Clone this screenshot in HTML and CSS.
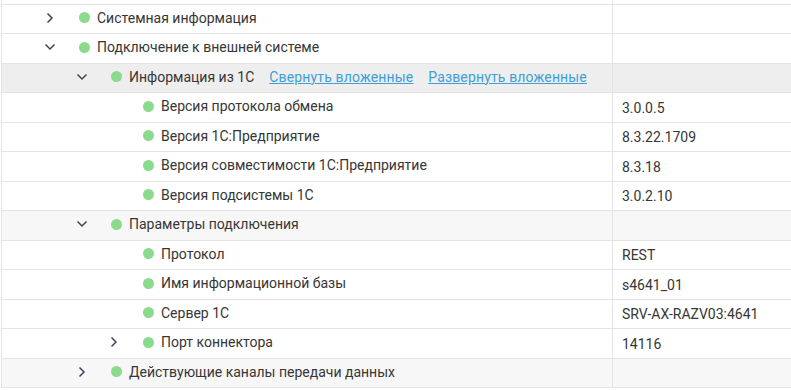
FILE: index.html
```html
<!DOCTYPE html>
<html>
<head>
    <title>Параметры подключения</title>
    <link rel="stylesheet" href="styles.css">
</head>
<body>
    <div class="tree">
        <div class="row spacer">
            <div class="name"></div>
            <div class="value"></div>
        </div>

        <div class="row">
            <div class="name lvl-0">
                <span class="toggle"><svg width="8" height="12" viewBox="0 0 8 12"><path d="M1.5 1.5 L6 6 L1.5 10.5" /></svg></span>
                <span class="dot"></span>
                <span class="title">Системная информация</span>
            </div>
            <div class="value"></div>
        </div>

        <div class="row">
            <div class="name lvl-0">
                <span class="toggle"><svg width="12" height="8" viewBox="0 0 12 8"><path d="M1.5 1.5 L6 6 L10.5 1.5" /></svg></span>
                <span class="dot"></span>
                <span class="title">Подключение к внешней системе</span>
            </div>
            <div class="value"></div>
        </div>

        <div class="row group active">
            <div class="name lvl-1">
                <span class="toggle"><svg width="12" height="8" viewBox="0 0 12 8"><path d="M1.5 1.5 L6 6 L10.5 1.5" /></svg></span>
                <span class="dot"></span>
                <span class="title">Информация из 1С</span>
                <a class="link" href="#">Свернуть вложенные</a>
                <a class="link" href="#">Развернуть вложенные</a>
            </div>
            <div class="value"></div>
        </div>

        <div class="row">
            <div class="name lvl-2">
                <span class="toggle"></span>
                <span class="dot"></span>
                <span class="title">Версия протокола обмена</span>
            </div>
            <div class="value">3.0.0.5</div>
        </div>

        <div class="row">
            <div class="name lvl-2">
                <span class="toggle"></span>
                <span class="dot"></span>
                <span class="title">Версия 1С:Предприятие</span>
            </div>
            <div class="value">8.3.22.1709</div>
        </div>

        <div class="row">
            <div class="name lvl-2">
                <span class="toggle"></span>
                <span class="dot"></span>
                <span class="title">Версия совместимости 1С:Предприятие</span>
            </div>
            <div class="value">8.3.18</div>
        </div>

        <div class="row">
            <div class="name lvl-2">
                <span class="toggle"></span>
                <span class="dot"></span>
                <span class="title">Версия подсистемы 1С</span>
            </div>
            <div class="value">3.0.2.10</div>
        </div>

        <div class="row group">
            <div class="name lvl-1">
                <span class="toggle"><svg width="12" height="8" viewBox="0 0 12 8"><path d="M1.5 1.5 L6 6 L10.5 1.5" /></svg></span>
                <span class="dot"></span>
                <span class="title">Параметры подключения</span>
            </div>
            <div class="value"></div>
        </div>

        <div class="row">
            <div class="name lvl-2">
                <span class="toggle"></span>
                <span class="dot"></span>
                <span class="title">Протокол</span>
            </div>
            <div class="value">REST</div>
        </div>

        <div class="row">
            <div class="name lvl-2">
                <span class="toggle"></span>
                <span class="dot"></span>
                <span class="title">Имя информационной базы</span>
            </div>
            <div class="value">s4641_01</div>
        </div>

        <div class="row">
            <div class="name lvl-2">
                <span class="toggle"></span>
                <span class="dot"></span>
                <span class="title">Сервер 1С</span>
            </div>
            <div class="value">SRV-AX-RAZV03:4641</div>
        </div>

        <div class="row">
            <div class="name lvl-2">
                <span class="toggle"><svg width="8" height="12" viewBox="0 0 8 12"><path d="M1.5 1.5 L6 6 L1.5 10.5" /></svg></span>
                <span class="dot"></span>
                <span class="title">Порт коннектора</span>
            </div>
            <div class="value">14116</div>
        </div>

        <div class="row group">
            <div class="name lvl-1">
                <span class="toggle"><svg width="8" height="12" viewBox="0 0 8 12"><path d="M1.5 1.5 L6 6 L1.5 10.5" /></svg></span>
                <span class="dot"></span>
                <span class="title">Действующие каналы передачи данных</span>
            </div>
            <div class="value"></div>
        </div>
    </div>
</body>
</html>
```

FILE: styles.css
```css
body {
    margin: 0;
    font-family: Roboto, "Liberation Sans", sans-serif;
    font-size: 14px;
    color: #363636;
    background-color: #ffffff;
}

.tree {
    margin-left: 1px;
    border-left: 1px solid #e4e4e4;
}

.row {
    display: flex;
    height: 29.5px;
    box-sizing: border-box;
    border-bottom: 1px solid #e4e4e4;
}

.row.spacer {
    height: 4.5px;
}

.row.group {
    background-color: #f7f7f7;
}

.row.active {
    background-color: #eeeeee;
}

.name {
    width: 611px;
    flex-shrink: 0;
    display: flex;
    align-items: center;
    border-right: 1px solid #e4e4e4;
    padding-bottom: 2px;
    box-sizing: border-box;
}

.lvl-0 { padding-left: 0; }
.lvl-1 { padding-left: 32px; }
.lvl-2 { padding-left: 64px; }

.toggle {
    width: 30px;
    margin-left: 33px;
    display: flex;
    justify-content: center;
    align-items: center;
}

.toggle svg path {
    fill: none;
    stroke: #3c4656;
    stroke-width: 1.5;
}

.dot {
    width: 11px;
    height: 11px;
    margin-left: 14px;
    border-radius: 50%;
    background-color: #8bdb8d;
    flex-shrink: 0;
}

.title {
    margin-left: 7px;
    white-space: nowrap;
}

.link {
    margin-left: 15px;
    color: #3d9fd6;
    text-decoration: underline;
    letter-spacing: 0.15px;
    white-space: nowrap;
}

.value {
    flex: 1;
    display: flex;
    align-items: center;
    padding-left: 9px;
    padding-top: 1px;
}
```
